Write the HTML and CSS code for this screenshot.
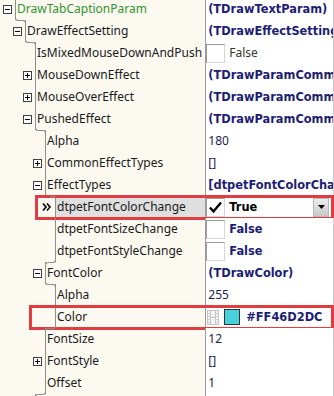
FILE: index.html
```html
<!DOCTYPE html>
<html lang="en">
<head>
  <meta charset="UTF-8">
  <title>Object Inspector</title>
  <link rel="stylesheet" href="styles.css">
</head>
<body>

<div class="inspector">

  <div class="row lv1">
    <div class="name"><span class="tog minus"></span><span class="label green">DrawTabCaptionParam</span></div>
    <div class="val"><b>(TDrawTextParam)</b></div>
  </div>

  <div class="row lv2 in">
    <div class="name"><span class="tog minus"></span><span class="label">DrawEffectSetting</span></div>
    <div class="val"><b>(TDrawEffectSetting)</b></div>
  </div>

  <div class="row lv3 in">
    <div class="name"><span class="tog"></span><span class="label">IsMixedMouseDownAndPush</span></div>
    <div class="val"><span class="check"></span><span class="plain">False</span></div>
  </div>

  <div class="row lv3">
    <div class="name"><span class="tog plus"></span><span class="label">MouseDownEffect</span></div>
    <div class="val"><b>(TDrawParamCommonEffect)</b></div>
  </div>

  <div class="row lv3">
    <div class="name"><span class="tog plus"></span><span class="label">MouseOverEffect</span></div>
    <div class="val"><b>(TDrawParamCommonEffect)</b></div>
  </div>

  <div class="row lv3">
    <div class="name"><span class="tog minus"></span><span class="label">PushedEffect</span></div>
    <div class="val"><b>(TDrawParamCommonEffect)</b></div>
  </div>

  <div class="row lv4 in">
    <div class="name"><span class="tog"></span><span class="label">Alpha</span></div>
    <div class="val"><span class="num">180</span></div>
  </div>

  <div class="row lv4">
    <div class="name"><span class="tog plus"></span><span class="label">CommonEffectTypes</span></div>
    <div class="val"><span class="num">[]</span></div>
  </div>

  <div class="row lv4">
    <div class="name"><span class="tog minus"></span><span class="label">EffectTypes</span></div>
    <div class="val"><b>[dtpetFontColorChange]</b></div>
  </div>

  <div class="row lv5 in selected">
    <div class="name">
      <span class="tog arrow">
        <svg width="9" height="8" viewBox="0 0 9 8"><path d="M1 0.5 L4 4 L1 7.5 M5 0.5 L8 4 L5 7.5" fill="none" stroke="#000" stroke-width="1.6"/></svg>
      </span>
      <span class="label">dtpetFontColorChange</span>
    </div>
    <div class="val">
      <span class="check">
        <svg width="17" height="17" viewBox="0 0 17 17"><path d="M3 8.5 L6.5 12.5 L14 3.5" fill="none" stroke="#000" stroke-width="2.4"/></svg>
      </span>
      <b class="black">True</b>
      <span class="drop"><svg width="7" height="4" viewBox="0 0 7 4"><path d="M0 0 H7 L3.5 4 Z" fill="#000"/></svg></span>
    </div>
    <span class="mark"></span>
  </div>

  <div class="row lv5">
    <div class="name"><span class="tog"></span><span class="label">dtpetFontSizeChange</span></div>
    <div class="val"><span class="check"></span><b>False</b></div>
  </div>

  <div class="row lv5">
    <div class="name"><span class="tog"></span><span class="label">dtpetFontStyleChange</span></div>
    <div class="val"><span class="check"></span><b>False</b></div>
  </div>

  <div class="row lv4 out">
    <div class="name"><span class="tog minus"></span><span class="label">FontColor</span></div>
    <div class="val"><b>(TDrawColor)</b></div>
  </div>

  <div class="row lv5 in">
    <div class="name"><span class="tog"></span><span class="label">Alpha</span></div>
    <div class="val"><span class="num">255</span></div>
  </div>

  <div class="row lv5 color-row">
    <div class="name"><span class="tog"></span><span class="label">Color</span></div>
    <div class="val">
      <svg class="film" width="12" height="15" viewBox="0 0 12 15">
        <rect x="0.5" y="0.5" width="11" height="14" fill="#f4f4f4" stroke="#c4c4c4"/>
        <path d="M3.5 0.5 V14.5 M8.5 0.5 V14.5 M3.5 7.5 H8.5" stroke="#c4c4c4" fill="none"/>
        <path d="M0.5 3.5 H3.5 M0.5 6.5 H3.5 M0.5 9.5 H3.5 M0.5 12.5 H3.5 M8.5 3.5 H11.5 M8.5 6.5 H11.5 M8.5 9.5 H11.5 M8.5 12.5 H11.5" stroke="#d0d0d0" fill="none"/>
      </svg>
      <span class="swatch" style="background: #46d2dc"></span>
      <b>#FF46D2DC</b>
    </div>
    <span class="mark"></span>
  </div>

  <div class="row lv4 out">
    <div class="name"><span class="tog"></span><span class="label">FontSize</span></div>
    <div class="val"><span class="num">12</span></div>
  </div>

  <div class="row lv4">
    <div class="name"><span class="tog plus"></span><span class="label">FontStyle</span></div>
    <div class="val"><span class="num">[]</span></div>
  </div>

  <div class="row lv4">
    <div class="name"><span class="tog"></span><span class="label">Offset</span></div>
    <div class="val"><span class="num">1</span></div>
  </div>

  <div class="row lv3 out">
    <div class="name"><span class="tog"></span><span class="label"></span></div>
    <div class="val"></div>
  </div>

</div>

</body>
</html>
```

FILE: styles.css
```css
body {
  margin: 0;
  background: #fcf9f1;
  font-family: "Noto Sans", "DejaVu Sans", sans-serif;
  font-size: 12px;
  color: #1a1a1a;
  overflow: hidden;
}

.inspector {
  width: 334px;
  height: 398px;
  margin-top: -2px;
  overflow: hidden;
}

.row {
  position: relative;
  display: flex;
  height: 22px;
  line-height: 22px;
}

/* indent per level: x of the tree line */
.lv1 { --pad: 3px; --x: 15px; }
.lv2 { --pad: 13px; --x: 25px; }
.lv3 { --pad: 23px; --x: 35px; }
.lv4 { --pad: 33px; --x: 45px; }
.lv5 { --pad: 43px; --x: 55px; }

.name {
  display: flex;
  align-items: center;
  width: 207px;
  padding-left: var(--pad);
  box-sizing: border-box;
  overflow: hidden;
}

.tog {
  position: relative;
  flex: none;
  width: 9px;
  height: 9px;
  margin-right: 3px;
  box-sizing: border-box;
}

.tog.plus,
.tog.minus {
  border: 1px solid #404040;
  background: #fff;
}

.tog.plus::before,
.tog.minus::before {
  content: "";
  position: absolute;
  left: 1px;
  top: 3px;
  width: 5px;
  height: 1px;
  background: #000;
}

.tog.plus::after {
  content: "";
  position: absolute;
  left: 3px;
  top: 1px;
  width: 1px;
  height: 5px;
  background: #000;
}

.tog.arrow {
  display: flex;
  align-items: center;
  margin-left: -1px;
  margin-right: 4px;
}

.label {
  position: relative;
  flex: 1;
  height: 22px;
  padding-left: 2px;
  white-space: nowrap;
  overflow: hidden;
}

.label::before {
  content: "";
  position: absolute;
  left: 0;
  top: 0;
  bottom: 0;
  width: 1px;
  background: #8f8f8f;
}

.green {
  color: #2f942f;
}

.selected .label {
  background: #dfdfdf;
}

/* small bends of the tree line where the indent changes */
.row.in::before,
.row.in::after,
.row.out::before,
.row.out::after {
  content: "";
  position: absolute;
  border: 0 solid #8f8f8f;
  box-sizing: border-box;
}

.row.in::before {
  left: calc(var(--x) - 10px);
  top: -4px;
  width: 6px;
  height: 5px;
  border-left-width: 1px;
  border-bottom-width: 1px;
  border-bottom-left-radius: 3px;
}

.row.in::after {
  left: calc(var(--x) - 5px);
  top: 0;
  width: 6px;
  height: 5px;
  border-top-width: 1px;
  border-right-width: 1px;
  border-top-right-radius: 3px;
}

.row.out::before {
  left: calc(var(--x) + 5px);
  top: -4px;
  width: 6px;
  height: 5px;
  border-right-width: 1px;
  border-bottom-width: 1px;
  border-bottom-right-radius: 3px;
}

.row.out::after {
  left: var(--x);
  top: 0;
  width: 6px;
  height: 5px;
  border-top-width: 1px;
  border-left-width: 1px;
  border-top-left-radius: 3px;
}

.val {
  display: flex;
  align-items: center;
  width: 126px;
  padding-left: 2px;
  border-left: 1px solid #9c9c9c;
  border-right: 1px solid #cfcfcf;
  background: #fff;
  white-space: nowrap;
  overflow: hidden;
  color: #1d1d74;
}

.val b {
  font-family: "DejaVu Sans", sans-serif;
  font-size: 11.4px;
  font-weight: bold;
}

.val .black {
  color: #000;
}

.num {
  color: #1e2050;
}

.plain {
  color: #333;
}

.check {
  flex: none;
  display: flex;
  align-items: center;
  justify-content: center;
  width: 19px;
  height: 19px;
  margin-left: -2px;
  margin-right: 4px;
  box-sizing: border-box;
  border: 1px solid #d6d6d6;
  border-top-color: #9a9a9a;
  border-left-color: #9a9a9a;
  background: #fff;
}

.drop {
  display: flex;
  align-items: center;
  justify-content: center;
  width: 16px;
  height: 19px;
  margin-left: auto;
  margin-right: 4px;
  box-sizing: border-box;
  border: 1px solid #b8b8b8;
  background: linear-gradient(#ececec, #c8c8c8);
}

.film {
  flex: none;
  margin-left: -1px;
  margin-right: 5px;
}

.swatch {
  flex: none;
  width: 16px;
  height: 16px;
  margin-right: 6px;
  box-sizing: border-box;
  border: 1px solid #333;
}

.mark {
  position: absolute;
  top: -1px;
  bottom: -2px;
  right: 0;
  left: 35px;
  border: 3px solid #e23c40;
}

.color-row .mark {
  left: 29px;
}
```
